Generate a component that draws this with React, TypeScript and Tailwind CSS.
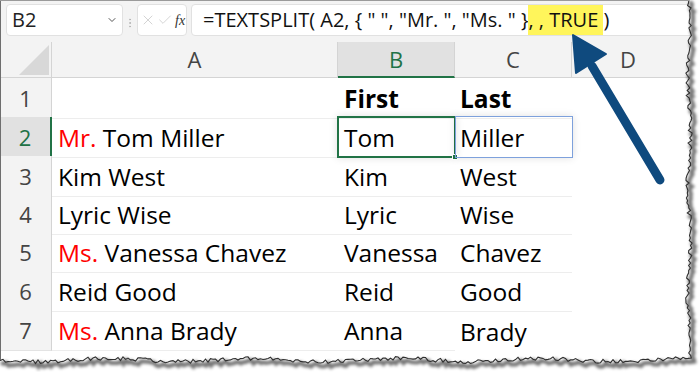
import { Check, ChevronDown, EllipsisVertical, X } from 'lucide-react';

type Row = {
  n: number;
  h: string;
  prefix?: string;
  name?: string;
  b: string;
  c: string;
  bold?: boolean;
};

const ROWS: Row[] = [
  { n: 1, h: 'h-[39px]', b: 'First', c: 'Last', bold: true },
  { n: 2, h: 'h-[39px]', prefix: 'Mr.', name: ' Tom Miller', b: 'Tom', c: 'Miller' },
  { n: 3, h: 'h-[38px]', name: 'Kim West', b: 'Kim', c: 'West' },
  { n: 4, h: 'h-[38px]', name: 'Lyric Wise', b: 'Lyric', c: 'Wise' },
  { n: 5, h: 'h-[39px]', prefix: 'Ms.', name: ' Vanessa Chavez', b: 'Vanessa', c: 'Chavez' },
  { n: 6, h: 'h-[39px]', name: 'Reid Good', b: 'Reid', c: 'Good' },
  { n: 7, h: 'h-[38px]', prefix: 'Ms.', name: ' Anna Brady', b: 'Anna', c: 'Brady' },
];

// torn paper edge, same every render
function tornEdge() {
  let s = 11;
  const rnd = () => {
    s = (s * 16807) % 2147483647;
    return s / 2147483647;
  };
  const pts: string[] = [];
  for (let y = -2; y <= 360; y += 2.5) {
    const x = 689 + Math.sin(y / 17) * 1.3 + (rnd() - 0.5) * 4;
    pts.push(`${x.toFixed(1)},${y.toFixed(1)}`);
  }
  for (let x = 688; x >= -2; x -= 2.5) {
    const y = 360 + Math.sin(x / 23) * 1.6 + (rnd() - 0.5) * 4;
    pts.push(`${x.toFixed(1)},${y.toFixed(1)}`);
  }
  return pts;
}

function Overlay() {
  const pts = tornEdge();
  const edge = 'M' + pts.join(' L');
  const mask = `M0 0 H700 V372 H0 Z M-2 -2 L${pts.join(' L')} Z`;
  return (
    <svg className="absolute top-0 left-0 pointer-events-none" width="700" height="372" viewBox="0 0 700 372">
      <defs>
        <filter id="blur" x="-10%" y="-10%" width="120%" height="120%">
          <feGaussianBlur stdDeviation="1.7" />
        </filter>
      </defs>
      {/* arrow */}
      <line x1="660" y1="180" x2="592" y2="66" stroke="#0f4a7e" strokeWidth="9" strokeLinecap="round" />
      <polygon points="573,35 576,73 606,54" fill="#0f4a7e" stroke="#0f4a7e" strokeWidth="2" strokeLinejoin="round" />
      {/* paper */}
      <path d={mask} fill="#ffffff" fillRule="evenodd" />
      <path d={edge} transform="translate(3 3.5)" fill="none" stroke="rgba(0,0,0,0.55)" strokeWidth="4" filter="url(#blur)" />
      <path d={edge} fill="none" stroke="#2f2f2f" strokeWidth="1.1" />
      <line x1="0.5" y1="0" x2="0.5" y2="360" stroke="#6e6e6e" strokeWidth="1" />
      <line x1="0" y1="0.5" x2="689" y2="0.5" stroke="#9a9a9a" strokeWidth="1" />
    </svg>
  );
}

function FormulaBar() {
  return (
    <div className="flex h-[42px] bg-[#f3f3f3] pt-[4px] font-['Open_Sans',sans-serif]">
      <div className="ml-[6px] flex h-[32px] w-[117px] items-center justify-between rounded-[4px] border border-[#e1e1e1] bg-white pl-[5px] pr-[4px]">
        <span className="text-[20px] text-[#222]">B2</span>
        <ChevronDown size={12} strokeWidth={2} className="text-[#555]" />
      </div>
      <div className="flex w-[14px] items-center justify-center">
        <EllipsisVertical size={12} className="text-[#b4b4b4]" />
      </div>
      <div className="flex h-[32px] w-[50px] items-center rounded-[4px] border border-[#e1e1e1] bg-white pl-[2px]">
        <X size={16} strokeWidth={1.2} className="text-[#c9c9c9]" />
        <Check size={16} strokeWidth={1.2} className="ml-[1px] text-[#c9c9c9]" />
        <span className="ml-[2px] font-['Liberation_Serif',serif] text-[14px] italic text-[#333]">fx</span>
      </div>
      <div className="ml-[4px] flex h-[32px] flex-1 items-stretch rounded-l-[4px] border border-[#e1e1e1] bg-white pl-[11px] text-[20px] text-[#111] whitespace-pre">
        <span className="flex items-center">=TEXTSPLIT( A2, {'{'} " ", "Mr. ", "Ms. " {'}'}</span>
        <span className="flex items-center bg-[#fff55b]">, , TRUE </span>
        <span className="flex items-center">)</span>
      </div>
    </div>
  );
}

function ColumnHeaders() {
  return (
    <div className="grid h-[36px] grid-cols-[52px_286px_117px_117px_128px] bg-[#f3f3f3] font-['Open_Sans',sans-serif] text-[22px] text-[#444]">
      <div className="relative border-r border-b border-[#d4d4d4]">
        <svg className="absolute top-0 left-0" width="52" height="36">
          <polygon points="19,33 49,3 49,33" fill="#d8d8d8" />
        </svg>
      </div>
      <div className="flex items-center justify-center border-r border-b border-[#d4d4d4]">A</div>
      <div className="flex items-center justify-center border-r border-b-2 border-r-[#d4d4d4] border-b-[#217346] bg-[#e1e1e1] text-[#217346]">B</div>
      <div className="flex items-center justify-center border-r border-b border-[#d4d4d4]">C</div>
      <div className="flex items-center justify-center border-b border-[#d4d4d4] pr-[16px]">D</div>
    </div>
  );
}

function Sheet() {
  return (
    <div className="font-['Open_Sans',sans-serif] text-[24.5px] text-black">
      {ROWS.map(r => {
        const sel = r.n === 2;
        return (
          <div key={r.n} className={`grid grid-cols-[52px_286px_117px_117px_128px] ${r.h}`}>
            <div
              className={
                sel
                  ? 'flex items-center justify-center border-r-2 border-b border-r-[#217346] border-b-[#dadada] bg-[#e1e1e1] pt-[2px] text-[22px] text-[#217346]'
                  : 'flex items-center justify-center border-r border-b border-r-[#d4d4d4] border-b-[#e3e3e3] bg-[#f3f3f3] pt-[2px] text-[22px] text-[#444]'
              }
            >
              {r.n}
            </div>
            <div className="flex items-center border-b border-[#ededed] pt-[3px] pl-[6px] whitespace-pre">
              {r.prefix && <span className="text-[#ff0000]">{r.prefix}</span>}
              {r.name}
            </div>
            <div className={`relative flex items-center border-b border-[#ededed] pt-[3px] pl-[6px] ${r.bold ? 'font-bold' : ''}`}>
              {sel && (
                <div className="absolute -top-[1px] -left-[1px] -right-[1px] -bottom-[1px] border-2 border-[#217346] shadow-[0_0_8px_rgba(0,0,0,0.12)]">
                  <div className="absolute -right-[4px] -bottom-[4px] h-[6px] w-[6px] border border-white bg-[#217346]" />
                </div>
              )}
              {r.b}
            </div>
            <div
              className={`relative flex items-center pt-[3px] pl-[5px] ${r.n === 7 ? '' : 'border-b border-[#ededed]'} ${r.bold ? 'font-bold' : ''}`}
            >
              {sel && (
                <div className="absolute -top-[1px] left-0 -right-[1px] -bottom-[1px] border border-[#7ea1dc] shadow-[0_0_8px_rgba(0,0,0,0.12)]" />
              )}
              {r.c}
            </div>
            <div />
          </div>
        );
      })}
    </div>
  );
}

export default function App() {
  return (
    <div className="relative h-[372px] w-[700px] overflow-hidden bg-white">
      <FormulaBar />
      <ColumnHeaders />
      <Sheet />
      <Overlay />
    </div>
  );
}
